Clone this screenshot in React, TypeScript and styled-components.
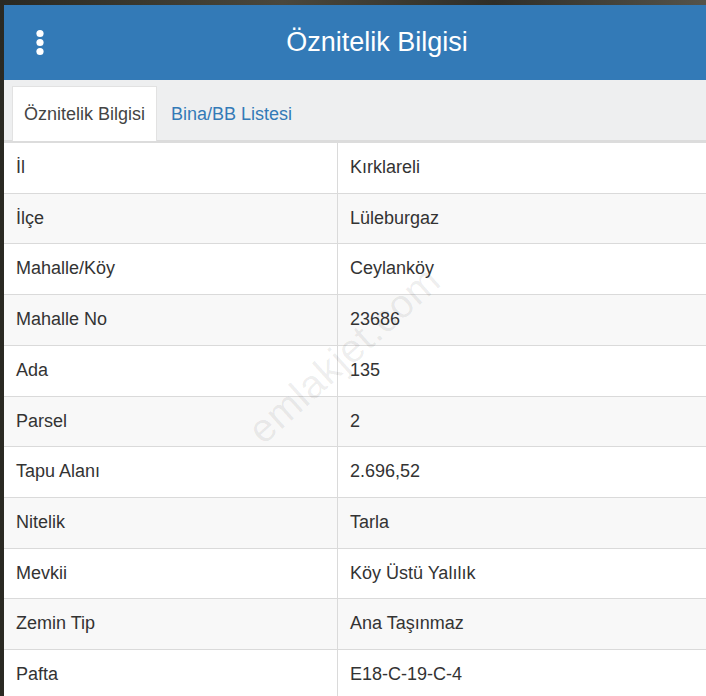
import React from "react";
import styled, { createGlobalStyle } from "styled-components";

const GlobalStyle = createGlobalStyle`
  html, body {
    margin: 0;
    padding: 0;
    overflow: hidden;
    background: #34332c;
  }
  body {
    font-family: "Liberation Sans", Arial, sans-serif;
    color: #333;
  }
`;

const Backdrop = styled.div`
  min-height: 696px;
  padding: 5px 0 0 4px;
  background:
    linear-gradient(90deg, #2a2922 0%, #4a473c 40%, #2f2e28 70%, #55534a 100%);
`;

const Panel = styled.section`
  position: relative;
  width: 746px;
  background: #fff;
`;

const Header = styled.header`
  height: 75px;
  background: #337ab7;
  display: flex;
  align-items: center;
  justify-content: center;
  position: relative;
`;

const MenuButton = styled.button`
  position: absolute;
  left: 28px;
  top: 21px;
  width: 16px;
  height: 34px;
  padding: 0;
  border: 0;
  background: transparent;
  display: flex;
  align-items: center;
  justify-content: center;
`;

const Title = styled.h1`
  margin: 0;
  font-size: 27px;
  font-weight: 400;
  color: #fff;
`;

const TabBar = styled.nav`
  height: 60px;
  background: #eeeff0;
  border-bottom: 3px solid #dcdcdc;
  display: flex;
  align-items: flex-end;
  padding-left: 8px;
  box-sizing: content-box;
`;

const Tab = styled.div<{ $active?: boolean }>`
  height: 55px;
  padding: 0 11px;
  display: flex;
  align-items: center;
  font-size: 18px;
  box-sizing: border-box;
  margin-bottom: -1px;
  margin-right: 2px;
  background: ${(p) => (p.$active ? "#fff" : "transparent")};
  color: ${(p) => (p.$active ? "#444" : "#337ab7")};
  border: 1px solid ${(p) => (p.$active ? "#e2e2e2" : "transparent")};
  border-bottom: none;
`;

const Table = styled.table`
  width: 100%;
  border-collapse: collapse;
  font-size: 18px;
  line-height: 25.7px;
`;

const Row = styled.tr<{ $striped: boolean }>`
  background: ${(p) => (p.$striped ? "#f8f8f8" : "#fff")};
`;

const Cell = styled.td<{ $label?: boolean }>`
  padding: 12px 12px;
  color: #333;
  width: ${(p) => (p.$label ? "309px" : "auto")};
  border-bottom: 1px solid #dadada;
  border-right: ${(p) => (p.$label ? "1px solid #dadada" : "none")};
  white-space: nowrap;
`;

const Watermark = styled.div`
  position: absolute;
  left: 340px;
  top: 350px;
  transform: translate(-50%, -50%) rotate(-42deg);
  font-size: 40px;
  color: rgba(0, 0, 0, 0.07);
  pointer-events: none;
  white-space: nowrap;
  letter-spacing: 0.5px;
`;

const rows: [string, string][] = [
  ["İl", "Kırklareli"],
  ["İlçe", "Lüleburgaz"],
  ["Mahalle/Köy", "Ceylanköy"],
  ["Mahalle No", "23686"],
  ["Ada", "135"],
  ["Parsel", "2"],
  ["Tapu Alanı", "2.696,52"],
  ["Nitelik", "Tarla"],
  ["Mevkii", "Köy Üstü Yalılık"],
  ["Zemin Tip", "Ana Taşınmaz"],
  ["Pafta", "E18-C-19-C-4"],
];

function DotsIcon() {
  return (
    <svg width="10" height="28" viewBox="0 0 10 28" aria-hidden="true">
      <circle cx="5" cy="4.5" r="3.6" fill="#fff" />
      <circle cx="5" cy="13.5" r="3.6" fill="#fff" />
      <circle cx="5" cy="22.5" r="3.6" fill="#fff" />
    </svg>
  );
}

export default function App() {
  return (
    <>
      <GlobalStyle />
      <Backdrop>
        <Panel>
          <Header>
            <MenuButton aria-label="Menü">
              <DotsIcon />
            </MenuButton>
            <Title>Öznitelik Bilgisi</Title>
          </Header>
          <TabBar>
            <Tab $active>Öznitelik Bilgisi</Tab>
            <Tab>Bina/BB Listesi</Tab>
          </TabBar>
          <Table>
            <tbody>
              {rows.map(([label, value], i) => (
                <Row key={label} $striped={i % 2 === 1}>
                  <Cell $label>{label}</Cell>
                  <Cell>{value}</Cell>
                </Row>
              ))}
            </tbody>
          </Table>
          <Watermark>emlakjet.com</Watermark>
        </Panel>
      </Backdrop>
    </>
  );
}
